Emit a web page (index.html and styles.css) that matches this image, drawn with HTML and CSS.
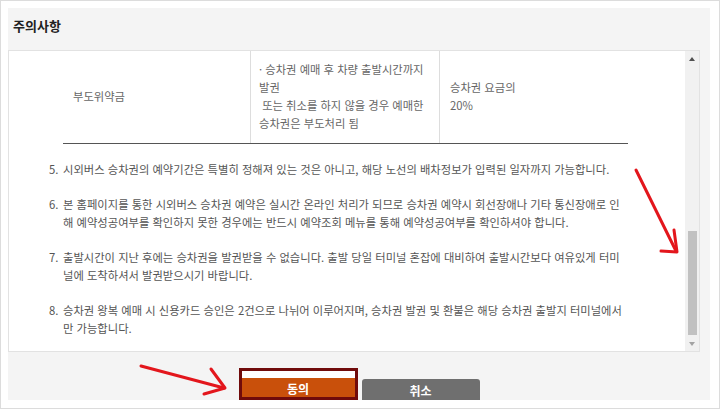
FILE: index.html
```html
<!DOCTYPE html>
<html lang="ko">
<head>
    <meta charset="UTF-8">
    <meta name="viewport" content="width=device-width, initial-scale=1.0">
    <title>주의사항</title>
    <link rel="stylesheet" href="styles.css">
</head>
<body>
    <div class="frame">
        <div class="panel">
            <div class="panel-head">
                <h2>주의사항</h2>
            </div>

            <div class="notice-box">
                <div class="notice-body">
                    <table class="fee-table">
                        <tr>
                            <td class="col-name">부도위약금</td>
                            <td class="col-desc">· 승차권 예매 후 차량 출발시간까지<br>발권<br>&nbsp;또는 취소를 하지 않을 경우 예매한<br>승차권은 부도처리 됨</td>
                            <td class="col-fee">승차권 요금의<br>20%</td>
                        </tr>
                    </table>

                    <ol class="notice-list">
                        <li><span class="num">5.</span><span class="txt">시외버스 승차권의 예약기간은 특별히 정해져 있는 것은 아니고, 해당 노선의 배차정보가 입력된 일자까지 가능합니다.</span></li>
                        <li><span class="num">6.</span><span class="txt">본 홈페이지를 통한 시외버스 승차권 예약은 실시간 온라인 처리가 되므로 승차권 예약시 회선장애나 기타 통신장애로 인<br>해 예약성공여부를 확인하지 못한 경우에는 반드시 예약조회 메뉴를 통해 예약성공여부를 확인하셔야 합니다.</span></li>
                        <li><span class="num">7.</span><span class="txt">출발시간이 지난 후에는 승차권을 발권받을 수 없습니다. 출발 당일 터미널 혼잡에 대비하여 출발시간보다 여유있게 터미<br>널에 도착하셔서 발권받으시기 바랍니다.</span></li>
                        <li><span class="num">8.</span><span class="txt">승차권 왕복 예매 시 신용카드 승인은 2건으로 나뉘어 이루어지며, 승차권 발권 및 환불은 해당 승차권 출발지 터미널에서<br>만 가능합니다.</span></li>
                    </ol>
                </div>

                <div class="scrollbar">
                    <div class="scroll-btn up"></div>
                    <div class="scroll-track">
                        <div class="scroll-thumb"></div>
                    </div>
                    <div class="scroll-btn down"></div>
                </div>
            </div>

            <div class="panel-foot">
                <div class="agree-mark">
                    <button class="btn btn-agree">동의</button>
                </div>
                <button class="btn btn-cancel">취소</button>
            </div>
        </div>

        <svg class="marks" width="720" height="409" viewBox="0 0 720 409">
            <g fill="none" stroke="#e3161c" stroke-width="3" stroke-linecap="round" stroke-linejoin="round">
                <path d="M635 169 L675 250"/>
                <path d="M660 250 L676 251 L673 229"/>
                <path d="M140 365 L223 387"/>
                <path d="M210 368 L224 387 L203 393"/>
            </g>
        </svg>
    </div>
</body>
</html>
```

FILE: styles.css
```css
body {
    margin: 0;
    font-family: "Noto Sans CJK KR", "Noto Sans", sans-serif;
    background: #fff;
}
.frame {
    position: relative;
    width: 720px;
    height: 409px;
    box-sizing: border-box;
    border: 1px solid #dcdcdc;
    padding: 7px 7px 0 7px;
    overflow: hidden;
}
.panel {
    width: 702px;
    height: 392px;
    background: #f4f4f4;
    display: flex;
    flex-direction: column;
    overflow: hidden;
}
.panel-head {
    height: 42px;
    display: flex;
    align-items: center;
    padding-left: 5px;
}
.panel-head h2 {
    margin: 0;
    font-size: 13px;
    font-weight: bold;
    color: #222;
    padding-bottom: 8px;
}
.notice-box {
    width: 692px;
    height: 302px;
    box-sizing: border-box;
    border: 1px solid #e2e2e2;
    background: #fff;
    display: flex;
}
.notice-body {
    flex: 1;
    padding: 0 0 0 54px;
    overflow: hidden;
    color: #666;
    font-size: 11.3px;
    line-height: 18px;
}
.fee-table {
    width: 565px;
    border-collapse: collapse;
}
.fee-table td {
    padding: 9px 10px 11px;
    vertical-align: middle;
    border-bottom: 1px solid #555;
    color: #666;
}
.fee-table .col-name {
    width: 167px;
    border-right: 1px solid #ddd;
}
.fee-table .col-desc {
    width: 170px;
    padding-left: 8px;
    border-right: 1px solid #ddd;
}
.notice-list {
    list-style: none;
    margin: 16px 0 0 0;
    padding: 0;
    color: #555;
}
.notice-list li {
    display: flex;
    margin-bottom: 17px;
    white-space: nowrap;
}
.notice-list .num {
    width: 14px;
    margin-left: -14px;
    flex-shrink: 0;
}
.scrollbar {
    width: 14px;
    background: #f1f1f1;
    display: flex;
    flex-direction: column;
}
.scroll-btn {
    height: 15px;
    display: flex;
    align-items: center;
    justify-content: center;
}
.scroll-btn::before {
    content: "";
    border-left: 3px solid transparent;
    border-right: 3px solid transparent;
}
.scroll-btn.up::before {
    border-bottom: 4px solid #505050;
}
.scroll-btn.down::before {
    border-top: 4px solid #a3a3a3;
}
.scroll-track {
    flex: 1;
    display: flex;
    flex-direction: column;
    justify-content: flex-end;
}
.scroll-thumb {
    height: 104px;
    margin: 0 2px 1px 3px;
    background: #c1c1c1;
}
.panel-foot {
    flex: 1;
    display: flex;
    justify-content: center;
    align-items: flex-end;
    gap: 4px;
}
.btn {
    border: none;
    color: #fff;
    font-family: "Noto Sans CJK KR", "Noto Sans", sans-serif;
    font-size: 12px;
    font-weight: bold;
    padding: 0;
    cursor: pointer;
}
.agree-mark {
    width: 119px;
    height: 32px;
    box-sizing: border-box;
    border: 3px solid #700b0b;
    background: #fff;
    padding-top: 7px;
    display: flex;
}
.btn-agree {
    flex: 1;
    background: #c9500b;
    line-height: 21px;
    height: 19px;
}
.btn-cancel {
    width: 118px;
    height: 21px;
    line-height: 24px;
    background: #6f6f6f;
    border-radius: 3px 3px 0 0;
}
.marks {
    position: absolute;
    left: 0;
    top: 0;
    pointer-events: none;
}
```
